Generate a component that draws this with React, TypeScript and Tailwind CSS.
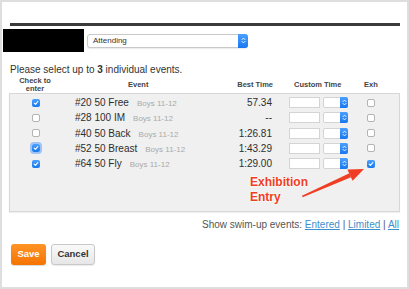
import React from "react";

const font = { fontFamily: '"Liberation Sans", Arial, sans-serif' };

function Chev() {
  return (
    <svg width="5" height="7" viewBox="0 0 5 7" fill="none" stroke="white" strokeWidth="0.9" strokeLinecap="round" strokeLinejoin="round">
      <path d="M1 2.6 L2.5 1.1 L4 2.6" />
      <path d="M1 4.4 L2.5 5.9 L4 4.4" />
    </svg>
  );
}

function Box({ checked, focus }: { checked?: boolean; focus?: boolean }) {
  if (checked) {
    return (
      <div
        className={
          "w-[8px] h-[8px] rounded-[2px] bg-gradient-to-b from-[#4aa0ff] to-[#1477f0] flex items-center justify-center " +
          (focus ? "shadow-[0_0_0_2px_rgba(90,160,250,0.55)]" : "")
        }
      >
        <svg width="6" height="6" viewBox="0 0 6 6" fill="none" stroke="white" strokeWidth="1.1" strokeLinecap="round" strokeLinejoin="round">
          <path d="M1.2 3.1 L2.5 4.4 L4.8 1.5" />
        </svg>
      </div>
    );
  }
  return <div className="w-[8px] h-[8px] rounded-[2px] bg-white border border-[#b3b3b3]" />;
}

const rows = [
  { ev: "#20 50 Free", best: "57.34", c: true, exh: false, focus: false },
  { ev: "#28 100 IM", best: "--", c: false, exh: false, focus: false },
  { ev: "#40 50 Back", best: "1:26.81", c: false, exh: false, focus: false },
  { ev: "#52 50 Breast", best: "1:43.29", c: true, exh: false, focus: true },
  { ev: "#64 50 Fly", best: "1:29.00", c: true, exh: true, focus: false },
];

export default function App() {
  return (
    <div style={font} className="w-[409px] h-[289px] border-2 border-[#dedede] bg-white relative flex flex-col text-[#333]">
      <div className="mt-[21px] ml-[8px] w-[390px] h-[3px] bg-[#3b3b3b]" />
      <div className="mt-[3px] ml-[1px] flex items-center">
        <div className="w-[81px] h-[23px] bg-black" />
        <div className="ml-[3px] w-[161px] h-[14px] rounded-[3px] border border-[#c9c9c9] bg-white flex items-center shadow-[0_1px_1px_rgba(0,0,0,0.08)]">
          <span className="ml-[5px] text-[8px] leading-none text-[#333] flex-1">Attending</span>
          <div className="w-[10px] h-[14px] -mr-px -my-px rounded-r-[3px] bg-gradient-to-b from-[#4aa0ff] to-[#1477f0] flex items-center justify-center">
            <Chev />
          </div>
        </div>
      </div>
      <div className="mt-[12px] ml-[8px] text-[10px] leading-[12px] text-[#333]">
        Please select up to <b>3</b> individual events.
      </div>
      <div className="mt-[1px] ml-[7px] h-[16px] flex items-center text-[7.5px] font-bold text-[#444]">
        <div className="w-[52px] text-center leading-[8px]">
          Check to
          <br />
          enter
        </div>
        <div className="w-[171px] pl-[67px]">Event</div>
        <div className="w-[40px] flex justify-end"><span className="whitespace-nowrap -mr-px">Best Time</span></div>
        <div className="w-[76px] pl-[22px] whitespace-nowrap">Custom Time</div>
        <div className="w-[46px] text-center">Exh</div>
      </div>
      <div className="ml-[7px] w-[391px] h-[119px] border border-[#d7d7d7] bg-[#f0f0f0] pt-[1px] shadow-[0_1px_1px_rgba(0,0,0,0.06)]">
        {rows.map((r, i) => (
          <div key={i} className="h-[15.25px] flex items-center">
            <div className="w-[51px] flex justify-center">
              <Box checked={r.c} focus={r.focus} />
            </div>
            <div className="w-[171px] pl-[14px] flex items-baseline whitespace-nowrap">
              <span className="text-[10px] text-[#2e2e2e]">{r.ev}</span>
              <span className="ml-[8px] text-[8px] text-[#aaa]">Boys 11-12</span>
            </div>
            <div className="w-[40px] text-right text-[10px] text-[#2e2e2e]">{r.best}</div>
            <div className="ml-[17px] w-[31px] h-[11px] bg-white border border-[#d4d4d4]" />
            <div className="ml-[3px] w-[25px] h-[11px] rounded-[2px] bg-white border border-[#d4d4d4] flex justify-end">
              <div className="w-[8px] h-[11px] -my-px -mr-px rounded-r-[2px] bg-gradient-to-b from-[#4aa0ff] to-[#1477f0] flex items-center justify-center">
                <Chev />
              </div>
            </div>
            <div className="w-[45px] flex justify-center">
              <Box checked={r.exh} />
            </div>
          </div>
        ))}
      </div>
      <div className="mt-[7px] mr-[8px] self-end text-[10px] leading-[12px] text-[#555] whitespace-nowrap">
        Show swim-up events: <span className="text-[#3d8fcc] underline">Entered</span> | <span className="text-[#3d8fcc] underline">Limited</span> | <span className="text-[#3d8fcc] underline">All</span>
      </div>
      <div className="mt-[13px] ml-[9px] flex gap-[5px]">
        <div className="w-[35px] h-[21px] rounded-[3px] bg-gradient-to-b from-[#ff9425] to-[#f57300] text-white text-[9.5px] font-bold flex items-center justify-center shadow-[0_1px_1px_rgba(0,0,0,0.15)]">
          Save
        </div>
        <div className="w-[44px] h-[21px] rounded-[3px] bg-gradient-to-b from-[#fafafa] to-[#e6e6e6] border border-[#c8c8c8] text-[#333] text-[9.5px] font-bold flex items-center justify-center shadow-[0_1px_1px_rgba(0,0,0,0.08)]">
          Cancel
        </div>
      </div>

      <div className="absolute left-[248px] top-[173px] text-[12px] leading-[15px] font-bold text-[#ef3e24] [text-shadow:0_0_2px_white,0_0_2px_white]">
        Exhibition
        <br />
        Entry
      </div>
      <svg className="absolute left-0 top-0" width="409" height="289" viewBox="2 2 409 289">
        <polygon points="302,195.8 349.4,173.2 351,177.2 302.6,197.2" fill="#ef3e24" />
        <polygon points="364,169 347.4,169.6 352.6,180.8" fill="#ef3e24" />
      </svg>
    </div>
  );
}
